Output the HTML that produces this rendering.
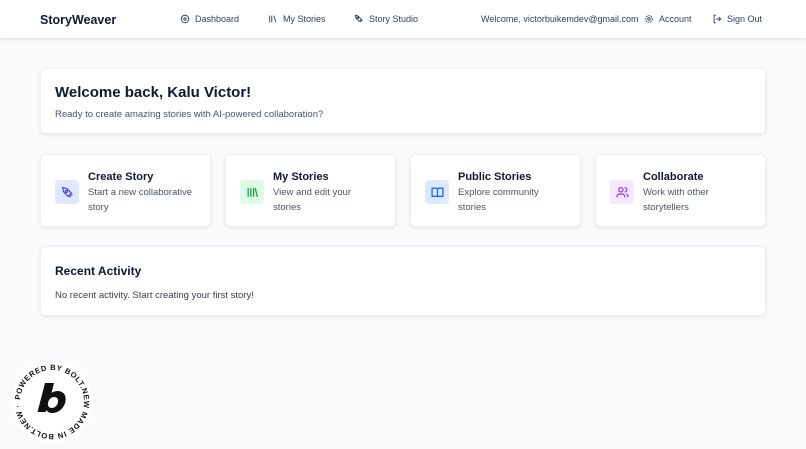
<!DOCTYPE html>
<html><head><meta charset="utf-8"><style>
*{box-sizing:border-box;margin:0;padding:0}
body{width:806px;height:449px;background:#f9fafb;font-family:"Liberation Sans",sans-serif;color:#111827;position:relative;overflow:hidden}
.hdr{position:absolute;left:0;top:0;width:806px;height:38px;background:#fff;box-shadow:0 1px 3px rgba(0,0,0,.12)}
.hdr .t{position:absolute;top:14px;font-size:9px;color:#374151;display:flex;align-items:center;gap:5px}
.logo{position:absolute;left:40px;top:13px;font-size:12.5px;font-weight:bold;color:#111827}
.card{position:absolute;background:#fff;border-radius:5px;box-shadow:0 1px 3px rgba(0,0,0,.1);border:1px solid #eef0f3}
.ic{position:absolute;left:14px;top:25px;width:24px;height:24px;border-radius:4px;display:flex;align-items:center;justify-content:center}
.ct{position:absolute;left:47px;top:16px;font-size:11px;font-weight:bold}
.cd{position:absolute;left:47px;top:31px;font-size:9.5px;color:#4b5563;line-height:14.5px;width:106px}
</style></head><body>
<div class="hdr">
<div class="logo">StoryWeaver</div>
<div class="t" style="left:180px"><svg width="10" height="10" viewBox="0 0 24 24" fill="none" stroke="#374151" stroke-width="2.2"><circle cx="12" cy="12" r="9"/><circle cx="12" cy="12" r="3"/></svg>Dashboard</div>
<div class="t" style="left:268px"><svg width="10" height="10" viewBox="0 0 24 24" fill="none" stroke="#374151" stroke-width="2.2"><path d="M4 4v16M9 4v16M14 4l5 16"/></svg>My Stories</div>
<div class="t" style="left:354px"><svg width="10" height="10" viewBox="0 0 24 24" fill="none" stroke="#374151" stroke-width="2.2"><path d="M3 3l7 2 8 8-5 5-8-8z"/><circle cx="9" cy="9" r="2"/><path d="M15 19l5-5"/></svg>Story Studio</div>
<div class="t" style="left:481px">Welcome, victorbuikemdev@gmail.com</div>
<div class="t" style="left:644px"><svg width="10" height="10" viewBox="0 0 24 24" fill="none" stroke="#374151" stroke-width="2.2"><circle cx="12" cy="12" r="3"/><circle cx="12" cy="12" r="8" stroke-dasharray="4 2"/></svg>Account</div>
<div class="t" style="left:712px"><svg width="10" height="10" viewBox="0 0 24 24" fill="none" stroke="#374151" stroke-width="2.2"><path d="M9 21H5V3h4M16 17l5-5-5-5M21 12H9"/></svg>Sign Out</div>
</div>

<div class="card" style="left:40px;top:68px;width:726px;height:66px">
<div style="position:absolute;left:14px;top:15px;font-size:15px;font-weight:bold">Welcome back, Kalu Victor!</div>
<div style="position:absolute;left:14px;top:40px;font-size:9.5px;color:#4b5563">Ready to create amazing stories with AI-powered collaboration?</div>
</div>

<div class="card" style="left:40px;top:154px;width:171px;height:73px">
<div class="ic" style="background:#e0e7ff"><svg width="13" height="13" viewBox="0 0 24 24" fill="none" stroke="#4f46e5" stroke-width="2.2"><path d="M3 3l8 2 8 8-6 6-8-8z"/><circle cx="10" cy="10" r="2"/><path d="M15 21l6-6"/></svg></div>
<div class="ct">Create Story</div><div class="cd">Start a new collaborative story</div></div>
<div class="card" style="left:225px;top:154px;width:171px;height:73px">
<div class="ic" style="background:#dcfce7"><svg width="13" height="13" viewBox="0 0 24 24" fill="none" stroke="#16a34a" stroke-width="2.4"><path d="M4 4v16M9 4v16M14 4v16M17 4l4 16"/></svg></div>
<div class="ct">My Stories</div><div class="cd">View and edit your stories</div></div>
<div class="card" style="left:410px;top:154px;width:171px;height:73px">
<div class="ic" style="background:#dbeafe"><svg width="13" height="13" viewBox="0 0 24 24" fill="none" stroke="#2563eb" stroke-width="2.4"><path d="M2 4h7a3 3 0 013 3v14a2 2 0 00-2-2H2zM22 4h-7a3 3 0 00-3 3v14a2 2 0 012-2h8z"/></svg></div>
<div class="ct">Public Stories</div><div class="cd">Explore community stories</div></div>
<div class="card" style="left:595px;top:154px;width:171px;height:73px">
<div class="ic" style="background:#f3e8ff"><svg width="13" height="13" viewBox="0 0 24 24" fill="none" stroke="#9333ea" stroke-width="2.2"><circle cx="9" cy="7" r="4"/><path d="M2 21v-2a4 4 0 014-4h6a4 4 0 014 4v2M16 3a4 4 0 010 8M22 21v-2a4 4 0 00-3-4"/></svg></div>
<div class="ct">Collaborate</div><div class="cd">Work with other storytellers</div></div>

<div class="card" style="left:40px;top:246px;width:726px;height:70px">
<div style="position:absolute;left:14px;top:17px;font-size:12px;font-weight:bold">Recent Activity</div>
<div style="position:absolute;left:14px;top:43px;font-size:9.5px;color:#374151">No recent activity. Start creating your first story!</div>
</div>

<svg style="position:absolute;left:10px;top:360px" width="84" height="84" viewBox="0 0 84 84">
<circle cx="42" cy="42" r="41" fill="#fff"/>
<defs><path id="c" d="M42 42 m-32 0 a32 32 0 1 1 64 0 a32 32 0 1 1 -64 0"/></defs>
<text font-family="Liberation Sans,sans-serif" font-size="7.6" font-weight="bold" fill="#111"><textPath href="#c" startOffset="2" textLength="196" lengthAdjust="spacing">POWERED BY BOLT.NEW MADE IN BOLT.NEW ·</textPath></text>
<path fill-rule="evenodd" fill="#111" d="M35 23 h9 l-2.5 10 c2-1.5 4-2 6-2 c6 0 9 4.5 8 10 c-1 7-7 12-13 12 c-3 0-5-1-6-3 l-1 2 h-8 z M44 37 c-3 0-5.5 3-6 6 c-0.5 3 1 5 4 5 c3 0 5.5-3 6-6 c0.5-3-1-5-4-5 z"/>
</svg>
</body></html>
